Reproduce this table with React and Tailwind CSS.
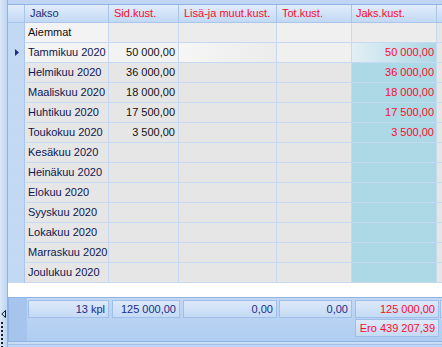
import React from 'react';

const rows = [
  { name: 'Aiemmat', sid: '', jaks: '' },
  { name: 'Tammikuu 2020', sid: '50 000,00', jaks: '50 000,00' },
  { name: 'Helmikuu 2020', sid: '36 000,00', jaks: '36 000,00' },
  { name: 'Maaliskuu 2020', sid: '18 000,00', jaks: '18 000,00' },
  { name: 'Huhtikuu 2020', sid: '17 500,00', jaks: '17 500,00' },
  { name: 'Toukokuu 2020', sid: '3 500,00', jaks: '3 500,00' },
  { name: 'Kesäkuu 2020', sid: '', jaks: '' },
  { name: 'Heinäkuu 2020', sid: '', jaks: '' },
  { name: 'Elokuu 2020', sid: '', jaks: '' },
  { name: 'Syyskuu 2020', sid: '', jaks: '' },
  { name: 'Lokakuu 2020', sid: '', jaks: '' },
  { name: 'Marraskuu 2020', sid: '', jaks: '' },
  { name: 'Joulukuu 2020', sid: '', jaks: '' },
];

const cell = 'h-[20px] border-r border-b border-[#c6d9f3] flex items-center';

const Row = ({ row, index }) => {
  const first = index === 0;
  const current = index === 1;
  const base = first || current ? 'bg-[#f3f3f3]' : 'bg-[#e6e6e6]';
  const other = first
    ? 'bg-[#ececec]'
    : current
      ? 'bg-gradient-to-r from-[#f6f6f6] to-[#ececec]'
      : 'bg-[#e6e6e6]';
  const jaks = first
    ? 'bg-[#ececec]'
    : current
      ? 'bg-gradient-to-r from-[#e2eff4] to-[#add8e6]'
      : 'bg-[#add8e6]';

  return (
    <div className="flex">
      <div className={`${cell} w-[17px] bg-[#c3d8f3] border-r-[#a9c5eb] justify-center`}>
        {current && (
          <svg width="4" height="7" viewBox="0 0 4 7" className="ml-[2px]">
            <path d="M0 0 L4 3.5 L0 7 Z" fill="#1b2f8a" />
          </svg>
        )}
      </div>
      <div className={`${cell} w-[84px] pl-[3px] ${base} ${first ? 'text-[#111]' : 'text-[#0d1550]'}`}>
        {row.name}
      </div>
      <div className={`${cell} w-[70px] justify-end pr-[3px] text-[#111] ${first ? 'bg-[#ececec]' : base}`}>
        {row.sid}
      </div>
      <div className={`${cell} w-[98px] ${other}`} />
      <div className={`${cell} w-[75px] ${first ? 'bg-[#f0f0f0]' : current ? 'bg-[#f0f0f0]' : 'bg-[#e6e6e6]'}`} />
      <div className={`${cell} w-[85px] justify-end pr-[2px] text-[#ff0a2a] ${jaks}`}>{row.jaks}</div>
      <div className={`${cell} flex-1 border-r-0 bg-[#e6e6e6]`} />
    </div>
  );
};

const FootCell = ({ w, children, red, className = '' }) => (
  <div
    className={`h-[18px] ${w} border border-[#9fbfe9] bg-gradient-to-b from-[#dde9f9] to-[#c5daf5] flex items-center justify-end pr-[3px] ${
      red ? 'text-[#ff0a2a]' : 'text-[#1a2c8c]'
    } ${className}`}
  >
    {children}
  </div>
);

export default function App() {
  return (
    <div
      className="w-[442px] h-[347px] flex bg-white overflow-hidden text-[11px] leading-none"
      style={{ fontFamily: '"Liberation Sans", Arial, sans-serif' }}
    >
      {/* splitter strip */}
      <div className="w-[8px] shrink-0 bg-gradient-to-r from-[#dbe8f9] to-[#bcd4f2] border-r border-[#8fb3e5] flex flex-col items-start">
        <div className="mt-[310px] ml-[1px]">
          <svg width="5" height="8" viewBox="0 0 5 8">
            <path d="M4.5 0.5 L0.8 4 L4.5 7.5 Z" fill="none" stroke="#1a1a1a" strokeWidth="1" />
          </svg>
        </div>
        <div className="mt-[4px] ml-[1px] flex flex-col gap-[2px]">
          {Array.from({ length: 7 }).map((_, i) => (
            <div key={i} className="w-[2px] h-[2px] bg-[#1a1a1a]" />
          ))}
        </div>
      </div>

      <div className="flex-1 flex flex-col">
        {/* top band */}
        <div className="h-[5px] bg-[#bfd5f3] border-b border-[#8fb3e5]" />
        {/* header */}
        <div className="flex h-[18px] bg-gradient-to-b from-[#e2edfb] to-[#c2d8f4] border-b border-[#a9c5eb]">
          <div className="w-[17px] border-r border-[#a9c5eb]" />
          <div className="w-[84px] border-r border-[#a9c5eb] pl-[5px] flex items-center text-[#1b2d7a]">Jakso</div>
          <div className="w-[70px] border-r border-[#a9c5eb] pl-[5px] flex items-center text-[#ff0a2a]">Sid.kust.</div>
          <div className="w-[98px] border-r border-[#a9c5eb] pl-[5px] flex items-center text-[#ff0a2a]">Lisä-ja muut.kust.</div>
          <div className="w-[75px] border-r border-[#a9c5eb] pl-[5px] flex items-center text-[#ff0a2a]">Tot.kust.</div>
          <div className="w-[85px] border-r border-[#a9c5eb] pl-[4px] flex items-center text-[#ff0a2a]">Jaks.kust.</div>
          <div className="flex-1" />
        </div>

        {rows.map((row, i) => (
          <Row key={row.name} row={row} index={i} />
        ))}

        <div className="h-[14px] bg-white" />

        {/* footer panel */}
        <div className="h-[44px] flex border-t border-l border-[#8fb3e5] bg-gradient-to-b from-[#c2d8f5] to-[#b0cdf1]">
          <div className="w-[18px] bg-[#a6c4ec]" />
          <div className="flex-1 flex flex-col pt-[2px] gap-[1px]">
            <div className="flex">
              <FootCell w="w-[81px]" className="ml-[1px]">13 kpl</FootCell>
              <FootCell w="w-[68px]" className="ml-[3px]">125 000,00</FootCell>
              <FootCell w="w-[94px]" className="ml-[3px]">0,00</FootCell>
              <FootCell w="w-[73px]" className="ml-[2px]">0,00</FootCell>
              <FootCell w="w-[84px]" className="ml-[3px]" red>125 000,00</FootCell>
              <FootCell w="flex-1" className="ml-[1px]" />
            </div>
            <div className="flex">
              <FootCell w="w-[84px]" className="ml-[328px]" red>Ero 439 207,39</FootCell>
            </div>
          </div>
        </div>
        <div className="flex-1 border-t border-[#8fb3e5] bg-gradient-to-b from-[#cfe0f7] to-[#b9d2f2]">
          <div className="mt-[2px] border-t border-[#9fbfe9]" />
        </div>
      </div>
    </div>
  );
}
